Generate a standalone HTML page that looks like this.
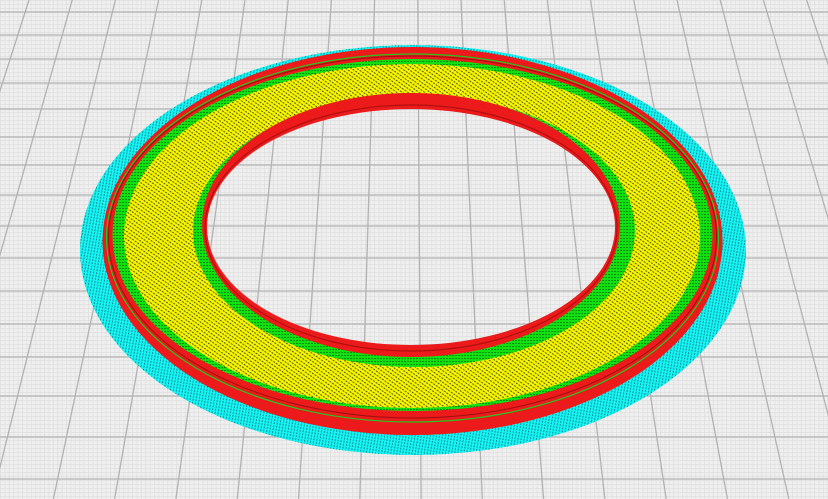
<!DOCTYPE html>
<html><head><meta charset="utf-8"><style>html,body{margin:0;padding:0;background:#ececec;overflow:hidden}svg{display:block}</style></head>
<body>
<svg width="828" height="499" viewBox="0 0 828 499" xmlns="http://www.w3.org/2000/svg">
<defs>
<pattern id="minor" width="4.4" height="4" patternUnits="userSpaceOnUse">
<rect width="4.4" height="4" fill="#efefef"/>
<path d="M0 0.5H4.4M0.5 0V4" stroke="#e0e0e0" stroke-width="0.8"/>
</pattern>
<pattern id="yel" width="3.2" height="3.2" patternUnits="userSpaceOnUse" patternTransform="rotate(35)">
<rect width="3.2" height="3.2" fill="#f6f600"/>
<path d="M0 1.6H3.2" stroke="#2a2a00" stroke-width="0.8" stroke-dasharray="1 1.2"/>
</pattern>
<pattern id="cy" width="3" height="3" patternUnits="userSpaceOnUse" patternTransform="rotate(10)">
<rect width="3" height="3" fill="#18f4f4"/>
<path d="M1.5 0V3" stroke="#005a60" stroke-width="0.7" stroke-dasharray="1 1.2"/>
</pattern>
<pattern id="gr" width="3" height="3" patternUnits="userSpaceOnUse">
<rect width="3" height="3" fill="#12e012"/>
<path d="M0 1.5H3" stroke="#064006" stroke-width="0.6" stroke-dasharray="1 1"/>
</pattern>
<mask id="hole">
<rect width="828" height="499" fill="#fff"/>
<ellipse cx="411" cy="227" rx="204" ry="118" fill="#000"/>
</mask>
</defs>
<rect width="828" height="499" fill="url(#minor)"/>
<g stroke="#b2b2b2" stroke-width="1.3">
<path d="M0 12H828M0 35H828M0 59H828M0 83H828M0 109H828M0 137H828M0 165H828M0 195H828M0 226H828M0 258H828M0 291H828M0 324H828M0 357H828M0 396H828M0 437H828M0 479H828"/>
<path d="M29 0L-130.5 499M72.2 0L-69.2 499M115.4 0L-7.9 499M158.6 0L53.4 499M201.8 0L114.6 499M245 0L175.9 499M288.2 0L237.2 499M331.4 0L298.5 499M374.6 0L359.8 499M417.8 0L421.1 499M461 0L482.3 499M504.2 0L543.6 499M547.4 0L604.9 499M590.6 0L666.2 499M633.8 0L727.5 499M677 0L788.8 499M720.2 0L850 499M763.4 0L911.3 499M806.6 0L972.6 499"/>
</g>
<g mask="url(#hole)">
<ellipse cx="413" cy="250" rx="333" ry="205" fill="url(#cy)"/>
<ellipse cx="412.5" cy="241" rx="310" ry="194" fill="#ec1a1a"/>
<ellipse cx="412.5" cy="238" rx="306" ry="184" fill="none" stroke="#22c822" stroke-width="1.2"/>
<ellipse cx="412.5" cy="237" rx="304" ry="181" fill="none" stroke="#9a1010" stroke-width="1"/>
<ellipse cx="412.5" cy="235" rx="300" ry="176" fill="url(#gr)"/>
<ellipse cx="412" cy="236" rx="288" ry="172" fill="url(#yel)"/>
<ellipse cx="414" cy="231" rx="221" ry="136" fill="url(#gr)"/>
<ellipse cx="411" cy="225" rx="209" ry="132" fill="#ec1a1a"/>
<ellipse cx="411" cy="228" rx="206" ry="123" fill="none" stroke="#b01010" stroke-width="1.2"/>
</g>
</svg>
</body></html>
